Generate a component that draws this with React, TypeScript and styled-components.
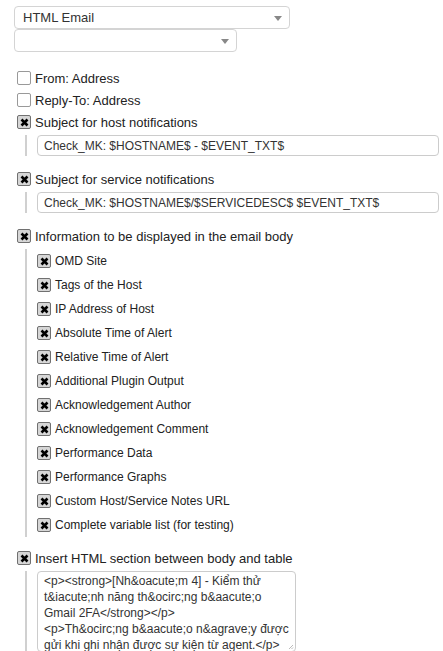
import styled, { createGlobalStyle } from "styled-components";

const GlobalStyle = createGlobalStyle`
    html, body {
        margin: 0;
        padding: 0;
        background: #fff;
    }
    body {
        font-family: "Liberation Sans", Arial, sans-serif;
        color: #222;
    }
`;

const Page = styled.div`
    padding-top: 6px;
    width: 443px;
    height: 651px;
    overflow: hidden;
`;

const Select = styled.div<{ $width: number }>`
    box-sizing: border-box;
    width: ${(p) => p.$width}px;
    height: 23px;
    margin-left: 14px;
    border: 1px solid #d4d4d4;
    border-radius: 4px;
    display: flex;
    align-items: center;
    justify-content: space-between;
    padding: 0 7px 0 8px;
    font-size: 13px;
    color: #333;
`;

const Arrow = styled.span`
    width: 0;
    height: 0;
    border-left: 4px solid transparent;
    border-right: 4px solid transparent;
    border-top: 5px solid #888;
    margin-top: 1px;
`;

const Options = styled.div`
    padding-left: 17px;
    margin-top: 15px;
`;

const Row = styled.label<{ $small?: boolean }>`
    display: flex;
    align-items: center;
    gap: 4px;
    height: ${(p) => (p.$small ? 24 : 22)}px;
    font-size: ${(p) => (p.$small ? 12 : 13)}px;
    color: #222;
`;

const Box = styled.span<{ $checked?: boolean }>`
    box-sizing: border-box;
    width: 14px;
    height: 14px;
    border: 1px solid ${(p) => (p.$checked ? "#707070" : "#999")};
    border-radius: 2px;
    background: ${(p) => (p.$checked ? "#d6d6d6" : "#fff")};
    display: flex;
    align-items: center;
    justify-content: center;
    flex-shrink: 0;
`;

const Nested = styled.div<{ $top?: number; $bottom?: number }>`
    margin-left: 8px;
    margin-top: ${(p) => p.$top ?? 2}px;
    margin-bottom: ${(p) => p.$bottom ?? 12}px;
    border-left: 2px solid #d0d0d0;
    padding-left: 10px;
`;

const TextInput = styled.div`
    box-sizing: border-box;
    width: 402px;
    height: 21px;
    border: 1px solid #ccc;
    border-radius: 4px;
    display: flex;
    align-items: center;
    padding-left: 6px;
    font-size: 12px;
    color: #333;
    white-space: nowrap;
`;

const TextArea = styled.div`
    position: relative;
    box-sizing: border-box;
    width: 259px;
    height: 81px;
    border: 1px solid #ccc;
    border-radius: 4px;
    padding: 1px 6px 0;
    font-size: 12px;
    line-height: 16px;
    color: #333;
`;

const Grip = styled.svg`
    position: absolute;
    right: 1px;
    bottom: 1px;
`;

const Check = ({ checked }: { checked?: boolean }) => (
    <Box $checked={checked}>
        {checked && (
            <svg width="9" height="9" viewBox="0 0 9 9">
                <path d="M1.5 1.5 L7.5 7.5 M7.5 1.5 L1.5 7.5" stroke="#000" strokeWidth="2.6" strokeLinecap="butt" />
            </svg>
        )}
    </Box>
);

const bodyItems = [
    "OMD Site",
    "Tags of the Host",
    "IP Address of Host",
    "Absolute Time of Alert",
    "Relative Time of Alert",
    "Additional Plugin Output",
    "Acknowledgement Author",
    "Acknowledgement Comment",
    "Performance Data",
    "Performance Graphs",
    "Custom Host/Service Notes URL",
    "Complete variable list (for testing)",
];

const App = () => {
    return (
        <>
            <GlobalStyle />
            <Page>
                <Select $width={276}>
                    <span>HTML Email</span>
                    <Arrow />
                </Select>
                <Select $width={223}>
                    <span></span>
                    <Arrow />
                </Select>
                <Options>
                    <Row>
                        <Check />
                        From: Address
                    </Row>
                    <Row>
                        <Check />
                        Reply-To: Address
                    </Row>
                    <Row>
                        <Check checked />
                        Subject for host notifications
                    </Row>
                    <Nested>
                        <TextInput>Check_MK: $HOSTNAME$ - $EVENT_TXT$</TextInput>
                    </Nested>
                    <Row>
                        <Check checked />
                        Subject for service notifications
                    </Row>
                    <Nested>
                        <TextInput>Check_MK: $HOSTNAME$/$SERVICEDESC$ $EVENT_TXT$</TextInput>
                    </Nested>
                    <Row>
                        <Check checked />
                        Information to be displayed in the email body
                    </Row>
                    <Nested $top={2} $bottom={10}>
                        {bodyItems.map((item) => (
                            <Row $small key={item}>
                                <Check checked />
                                {item}
                            </Row>
                        ))}
                    </Nested>
                    <Row>
                        <Check checked />
                        Insert HTML section between body and table
                    </Row>
                    <Nested $bottom={0}>
                        <TextArea>
                            &lt;p&gt;&lt;strong&gt;[Nh&amp;oacute;m 4] - Kiểm thử t&amp;iacute;nh năng th&amp;ocirc;ng b&amp;aacute;o Gmail 2FA&lt;/strong&gt;&lt;/p&gt;
                            <br />
                            &lt;p&gt;Th&amp;ocirc;ng b&amp;aacute;o n&amp;agrave;y được gửi khi ghi nhận được sự kiện từ agent.&lt;/p&gt;
                            <Grip width="6" height="6" viewBox="0 0 6 6">
                                <path d="M1 5 L5 1 M3.5 5 L5 3.5" stroke="#aaa" strokeWidth="0.8" />
                            </Grip>
                        </TextArea>
                    </Nested>
                </Options>
            </Page>
        </>
    );
};

export default App;
